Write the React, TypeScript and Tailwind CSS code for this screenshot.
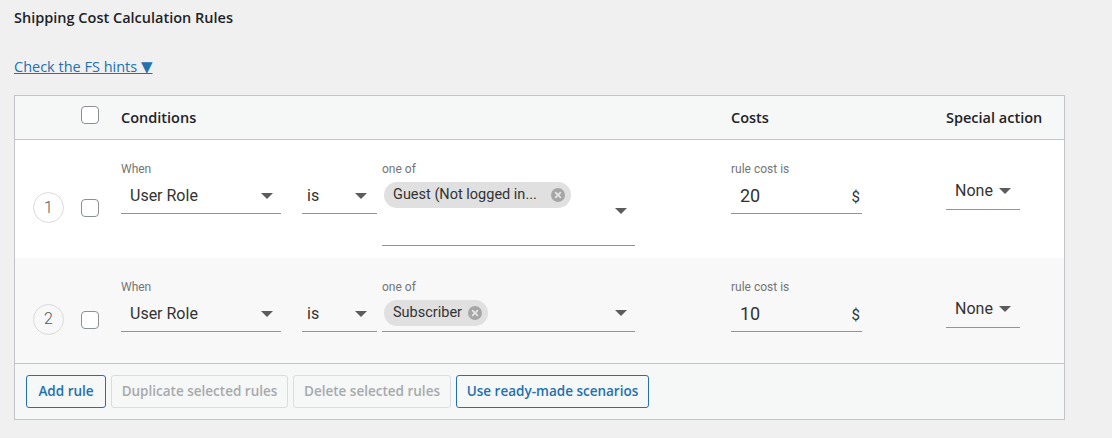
import React from "react";

type Rule = {
  id: number;
  role: string;
  cost: string;
  wrap: boolean;
};

const rules: Rule[] = [
  { id: 1, role: "Guest (Not logged in...", cost: "20", wrap: true },
  { id: 2, role: "Subscriber", cost: "10", wrap: false },
];

function Caret() {
  return <span className="inline-block w-0 h-0 border-l-[6px] border-r-[6px] border-t-[6px] border-l-transparent border-r-transparent border-t-[#5c5c5c]" />;
}

function Checkbox() {
  return <span className="block w-[18px] h-[18px] rounded-[4px] border border-[#8c8f94] bg-white" />;
}

function ChipClose() {
  return (
    <svg width="14" height="14" viewBox="0 0 14 14" className="shrink-0">
      <circle cx="7" cy="7" r="7" fill="#a6a6a6" />
      <path d="M4.6 4.6 9.4 9.4M9.4 4.6 4.6 9.4" stroke="#e6e6e6" strokeWidth="1.6" strokeLinecap="round" />
    </svg>
  );
}

function Label({ children }: { children: React.ReactNode }) {
  return <div className="h-4 text-[12px] leading-4 text-[#757575]">{children}</div>;
}

function RuleRow({ rule, striped }: { rule: Rule; striped: boolean }) {
  return (
    <div className={`flex min-h-[105px] pt-[21px] pb-[12px] font-['Roboto',sans-serif] ${striped ? "bg-[#f8f8f8]" : "bg-white"}`}>
      <div className="w-[58px] pl-[18px] self-center mt-[8px]">
        <span className="w-[31px] h-[31px] rounded-full border border-[#dadada] flex items-center justify-center text-[16px] font-light text-[#50575e]">
          {rule.id}
        </span>
      </div>
      <div className="w-[48px] pl-[8px] self-center mt-[9px]">
        <Checkbox />
      </div>

      {/* conditions */}
      <div className="w-[610px] flex items-start">
        <div className="w-[160px]">
          <Label>When</Label>
          <div className="h-[37px] flex items-center justify-between pl-[9px] pr-[8px] pt-[2px] border-b border-[#949494]">
            <span className="text-[16px] text-[#333]">User Role</span>
            <Caret />
          </div>
        </div>
        <div className="w-[75px] ml-[21px] mt-4">
          <div className="h-[37px] flex items-center justify-between pl-[5px] pr-[10px] pt-[2px] border-b border-[#949494]">
            <span className="text-[16px] text-[#333]">is</span>
            <Caret />
          </div>
        </div>
        <div className="w-[253px] ml-[5px]">
          <Label>one of</Label>
          <div className={`${rule.wrap ? "h-[69px]" : "h-[37px]"} flex items-center border-b border-[#949494] pl-[2px] pr-[8px]`}>
            <div className={`flex-1 flex flex-wrap ${rule.wrap ? "self-start mt-[5px]" : ""}`}>
              <span className="h-[26px] flex items-center gap-[6px] rounded-full bg-[#e0e0e0] pl-[9px] pr-[6px] text-[14.5px] text-[#333]">
                <span className={rule.wrap ? "min-w-[152px]" : ""}>{rule.role}</span>
                <ChipClose />
              </span>
            </div>
            <Caret />
          </div>
        </div>
      </div>

      {/* costs */}
      <div className="w-[215px]">
        <Label>rule cost is</Label>
        <div className="w-[131px] h-[37px] flex items-center justify-between pl-[9px] pr-[2px] border-b border-[#949494]">
          <span className="text-[18px] text-[#333]">{rule.cost}</span>
          <span className="text-[15px] text-[#333] mt-[4px]">$</span>
        </div>
      </div>

      {/* special action */}
      <div className="flex-1 pt-[12px]">
        <div className="w-[74px] h-[37px] flex items-center gap-[6px] pl-[9px] border-b border-[#949494]">
          <span className="text-[16px] text-[#333]">None</span>
          <Caret />
        </div>
      </div>
    </div>
  );
}

export default function App() {
  return (
    <div className="min-h-screen bg-[#f0f0f1] px-[14px] pt-[8px] pb-[20px] font-['Open_Sans',sans-serif] text-[#1d2327]">
      <h2 className="text-[14.5px] leading-5 font-semibold">Shipping Cost Calculation Rules</h2>
      <a href="#" className="inline-block mt-[29px] text-[14.5px] leading-5 text-[#2271b1] underline">
        Check the FS hints <span className="font-['DejaVu_Sans',sans-serif] text-[15px]">▼</span>
      </a>

      <div className="mt-[17px] w-[1051px] border border-[#c3c4c7] bg-white">
        <div className="h-[44px] flex items-center bg-[#f6f7f7] border-b border-[#c3c4c7] text-[14.5px] font-semibold">
          <div className="w-[58px]" />
          <div className="w-[48px] pl-[8px] -mt-[5px]">
            <Checkbox />
          </div>
          <div className="w-[610px]">Conditions</div>
          <div className="w-[215px]">Costs</div>
          <div className="flex-1">Special action</div>
        </div>

        {rules.map((r, i) => (
          <RuleRow key={r.id} rule={r} striped={i % 2 === 1} />
        ))}

        <div className="h-[56px] flex items-start gap-[5px] pt-[11px] pl-[11px] bg-[#f6f7f7] border-t border-[#c3c4c7] text-[13.5px] font-semibold">
          <button className="w-[80px] h-[33px] rounded-[3px] border border-[#2271b1] text-[#2271b1] bg-[#f6f7f7]">Add rule</button>
          <button className="w-[177px] h-[33px] rounded-[3px] border border-[#dcdcde] text-[#a7aaad] bg-[#f6f7f7]">Duplicate selected rules</button>
          <button className="w-[158px] h-[33px] rounded-[3px] border border-[#dcdcde] text-[#a7aaad] bg-[#f6f7f7]">Delete selected rules</button>
          <button className="w-[193px] h-[33px] rounded-[3px] border border-[#2271b1] text-[#2271b1] bg-[#f6f7f7]">Use ready-made scenarios</button>
        </div>
      </div>
    </div>
  );
}
